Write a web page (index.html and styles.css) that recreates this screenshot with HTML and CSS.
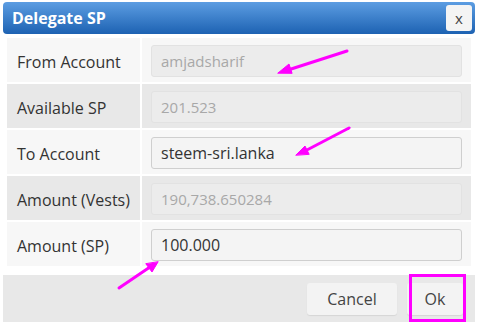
FILE: index.html
```html
<!DOCTYPE html>
<html lang="en">

<head>
    <meta charset="UTF-8">
    <meta name="viewport" content="width=device-width, initial-scale=1.0">
    <title>Delegate SP</title>
    <link rel="stylesheet" href="styles.css">
</head>

<body>

    <div class="dialog">
        <!-- Cabecera -->
        <div class="dialog-header">
            <span class="dialog-title">Delegate SP</span>
            <button class="close-btn">x</button>
        </div>

        <!-- Formulario -->
        <div class="dialog-body">
            <div class="form-grid">
                <div class="cell label odd">From Account</div>
                <div class="cell odd"><input class="field readonly" type="text" value="amjadsharif" readonly></div>

                <div class="cell label even">Available SP</div>
                <div class="cell even"><input class="field readonly" type="text" value="201.523" readonly></div>

                <div class="cell label odd">To Account</div>
                <div class="cell odd"><input class="field" type="text" value="steem-sri.lanka"></div>

                <div class="cell label even">Amount (Vests)</div>
                <div class="cell even"><input class="field readonly" type="text" value="190,738.650284" readonly></div>

                <div class="cell label odd">Amount (SP)</div>
                <div class="cell odd"><input class="field" type="text" value="100.000"></div>
            </div>
        </div>

        <!-- Botones -->
        <div class="dialog-footer">
            <button class="btn btn-cancel">Cancel</button>
            <button class="btn btn-ok">Ok</button>
        </div>
    </div>

    <!-- Anotaciones -->
    <div class="highlight-box"></div>
    <svg class="annotations" width="478" height="327" viewBox="0 0 478 327">
        <g stroke="#ff00ff" stroke-width="3" stroke-linecap="round" fill="#ff00ff">
            <line x1="347" y1="51" x2="288" y2="70" />
            <polygon points="278,73 289,64 292,73" stroke-width="1" stroke-linejoin="round" />
            <line x1="349" y1="128" x2="305" y2="151" />
            <polygon points="296,155 305,146 309,154" stroke-width="1" stroke-linejoin="round" />
            <line x1="119" y1="288" x2="150" y2="267" />
            <polygon points="158,262 152,272 146,264" stroke-width="1" stroke-linejoin="round" />
        </g>
    </svg>

</body>

</html>
```

FILE: styles.css
```css
/* Reset */
* {
    margin: 0;
    padding: 0;
    box-sizing: border-box;
}

body {
    width: 478px;
    height: 327px;
    background-color: #ffffff;
    font-family: "Open Sans", "Liberation Sans", sans-serif;
    color: #333;
    position: relative;
    overflow: hidden;
}

/* Ventana */
.dialog {
    margin: 2px 3px 0 3px;
    width: 472px;
    display: flex;
    flex-direction: column;
}

.dialog-header {
    height: 32px;
    display: flex;
    align-items: center;
    justify-content: space-between;
    padding: 0 3px 0 9px;
    border-radius: 4px;
    background: linear-gradient(to bottom, #5c9de2, #1d62b2);
}

.dialog-title {
    color: #fff;
    font-size: 16px;
    font-weight: bold;
}

.close-btn {
    width: 26px;
    height: 26px;
    border: none;
    border-radius: 3px;
    background-color: #f4f4f4;
    color: #444;
    font-family: inherit;
    font-size: 15px;
}

/* Cuerpo */
.dialog-body {
    padding: 4px 4px 9px 4px;
}

.form-grid {
    display: grid;
    grid-template-columns: 133px 1fr;
    gap: 2px;
}

.cell {
    height: 44px;
    display: flex;
    align-items: center;
    padding: 2px 9px 0 9px;
}

.cell.label {
    padding: 4px 0 0 10px;
    font-size: 16px;
    color: #333;
}

.odd {
    background-color: #f7f7f7;
}

.even {
    background-color: #e8e8e8;
}

.field {
    width: 100%;
    height: 32px;
    padding: 0 9px;
    border: 1px solid #cfcfcf;
    border-radius: 3px;
    background-color: #f4f4f4;
    font-family: inherit;
    font-size: 16px;
    color: #333;
    outline: none;
}

.field.readonly {
    background-color: #ececec;
    border-color: #e2e2e2;
    color: #a8a8a8;
    font-size: 15px;
}

/* Pie */
.dialog-footer {
    height: 47px;
    display: flex;
    align-items: center;
    justify-content: flex-end;
    gap: 10px;
    padding: 0 12px 0 0;
    background-color: #e8e8e8;
}

.btn {
    height: 32px;
    border: none;
    border-radius: 3px;
    background-color: #f3f3f3;
    font-family: inherit;
    font-size: 16px;
    color: #444;
    box-shadow: 0 1px 1px rgba(0, 0, 0, 0.08);
}

.btn-cancel {
    width: 90px;
}

.btn-ok {
    width: 56px;
}

/* Anotaciones */
.highlight-box {
    position: absolute;
    left: 409px;
    top: 274px;
    width: 57px;
    height: 48px;
    border: 3px solid #ff00ff;
}

.annotations {
    position: absolute;
    left: 0;
    top: 0;
    pointer-events: none;
}
```
